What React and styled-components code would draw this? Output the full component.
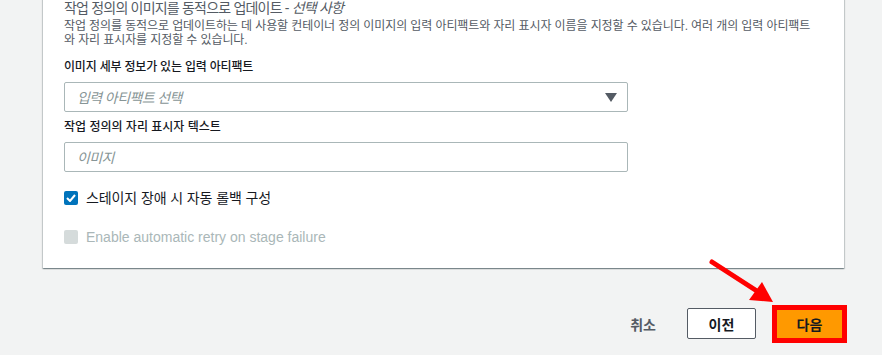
import React from 'react';
import styled, { createGlobalStyle } from 'styled-components';

const GlobalStyle = createGlobalStyle`
    html, body {
        margin: 0;
        padding: 0;
        background: #f2f3f3;
    }
    body {
        font-family: "Liberation Sans", Arial, "Noto Sans CJK KR", sans-serif;
        color: #16191f;
        overflow: hidden;
    }
`;

const Page = styled.div`
    position: relative;
    width: 882px;
    height: 355px;
    overflow: hidden;
`;

// the card's top edge lies above the visible area
const Card = styled.section`
    margin: -20px 38px 0 43px;
    padding: 20px 20px 0 21px;
    height: 288px;
    box-sizing: border-box;
    background: #fff;
    box-shadow: 0 1px 1px 0 rgba(0, 28, 36, 0.3), 1px 1px 1px 0 rgba(0, 28, 36, 0.15), -1px 1px 1px 0 rgba(0, 28, 36, 0.15);
`;

const Title = styled.h3`
    margin: 0;
    font-size: 14px;
    line-height: 16px;
    font-weight: 400;
    color: #545b64;
    letter-spacing: -0.8px;
    white-space: nowrap;
    em {
        font-style: italic;
    }
`;

const Description = styled.p`
    margin: 3px 0 0;
    font-size: 12px;
    line-height: 14px;
    color: #545b64;
    letter-spacing: -0.1px;
    white-space: nowrap;
`;

const Field = styled.div`
    margin-top: ${props => props.top}px;
    display: flex;
    flex-direction: column;
    width: 564px;
`;

const Label = styled.label`
    font-size: 12px;
    line-height: 14px;
    font-weight: 500;
    color: #16191f;
    letter-spacing: ${props => props.spacing || '0px'};
    margin-bottom: 8px;
`;

const Control = styled.div`
    position: relative;
    height: 30px;
    box-sizing: border-box;
    border: 1px solid #aab7b8;
    border-radius: 2px;
    display: flex;
    align-items: center;
    padding: 0 12px;
    font-size: 14px;
    font-style: italic;
    color: #879596;
    letter-spacing: -0.6px;
`;

const Caret = styled.span`
    margin-left: auto;
    margin-right: -2px;
    width: 0;
    height: 0;
    border-left: 6px solid transparent;
    border-right: 6px solid transparent;
    border-top: 9px solid #545b64;
`;

const CheckRow = styled.div`
    display: flex;
    align-items: center;
    gap: 8px;
    margin-top: ${props => props.top}px;
    font-size: 14px;
    line-height: 16px;
    color: ${props => (props.disabled ? '#aab7b8' : '#16191f')};
    letter-spacing: ${props => (props.disabled ? '0' : '-0.1px')};
`;

const Box = styled.span`
    width: 14px;
    height: 14px;
    box-sizing: border-box;
    border-radius: 2px;
    background: ${props => (props.checked ? '#0073bb' : '#d5dbdb')};
    display: flex;
    align-items: center;
    justify-content: center;
`;

const Footer = styled.div`
    display: flex;
    justify-content: flex-end;
    align-items: center;
    margin: 40px 40px 0 0;
`;

const CancelLink = styled.span`
    font-size: 14px;
    font-weight: 700;
    color: #545b64;
    margin-right: 31px;
`;

const Button = styled.button`
    font-family: inherit;
    font-size: 14px;
    font-weight: 700;
    height: ${props => (props.primary ? '28px' : '31px')};
    width: ${props => (props.primary ? '65px' : '69px')};
    border-radius: ${props => (props.primary ? '0' : '2px')};
    border: ${props => (props.primary ? 'none' : '1px solid #545b64')};
    background: ${props => (props.primary ? '#ff9900' : '#fff')};
    color: #16191f;
    padding: 0;
    margin-left: ${props => (props.primary ? '21px' : '0')};
    box-shadow: ${props => (props.primary ? '0 0 0 5px #ff0000' : 'none')};
`;

const Annotation = styled.svg`
    position: absolute;
    left: 0;
    top: 0;
    pointer-events: none;
`;

function Check() {
    return (
        <svg width="10" height="8" viewBox="0 0 10 8">
            <path d="M1 4 L4 7 L9 1" fill="none" stroke="#fff" strokeWidth="2" />
        </svg>
    );
}

export default function App() {
    return (
        <Page>
            <GlobalStyle />
            <Card>
                <Title>작업 정의의 이미지를 동적으로 업데이트 - <em>선택 사항</em></Title>
                <Description>
                    작업 정의를 동적으로 업데이트하는 데 사용할 컨테이너 정의 이미지의 입력 아티팩트와 자리 표시자 이름을 지정할 수 있습니다. 여러 개의 입력 아티팩트
                    <br />
                    와 자리 표시자를 지정할 수 있습니다.
                </Description>
                <Field top={13}>
                    <Label spacing="-0.2px">이미지 세부 정보가 있는 입력 아티팩트</Label>
                    <Control>
                        입력 아티팩트 선택
                        <Caret />
                    </Control>
                </Field>
                <Field top={8}>
                    <Label>작업 정의의 자리 표시자 텍스트</Label>
                    <Control>이미지</Control>
                </Field>
                <CheckRow top={18}>
                    <Box checked><Check /></Box>
                    스테이지 장애 시 자동 롤백 구성
                </CheckRow>
                <CheckRow top={23} disabled>
                    <Box />
                    Enable automatic retry on stage failure
                </CheckRow>
            </Card>
            <Footer>
                <CancelLink>취소</CancelLink>
                <Button>이전</Button>
                <Button primary>다음</Button>
            </Footer>
            <Annotation width="882" height="355">
                <line x1="712" y1="262" x2="760" y2="293" stroke="#ff0000" strokeWidth="5" strokeLinecap="round" />
                <polygon points="773,302 749,300 762,282" fill="#ff0000" />
            </Annotation>
        </Page>
    );
}
